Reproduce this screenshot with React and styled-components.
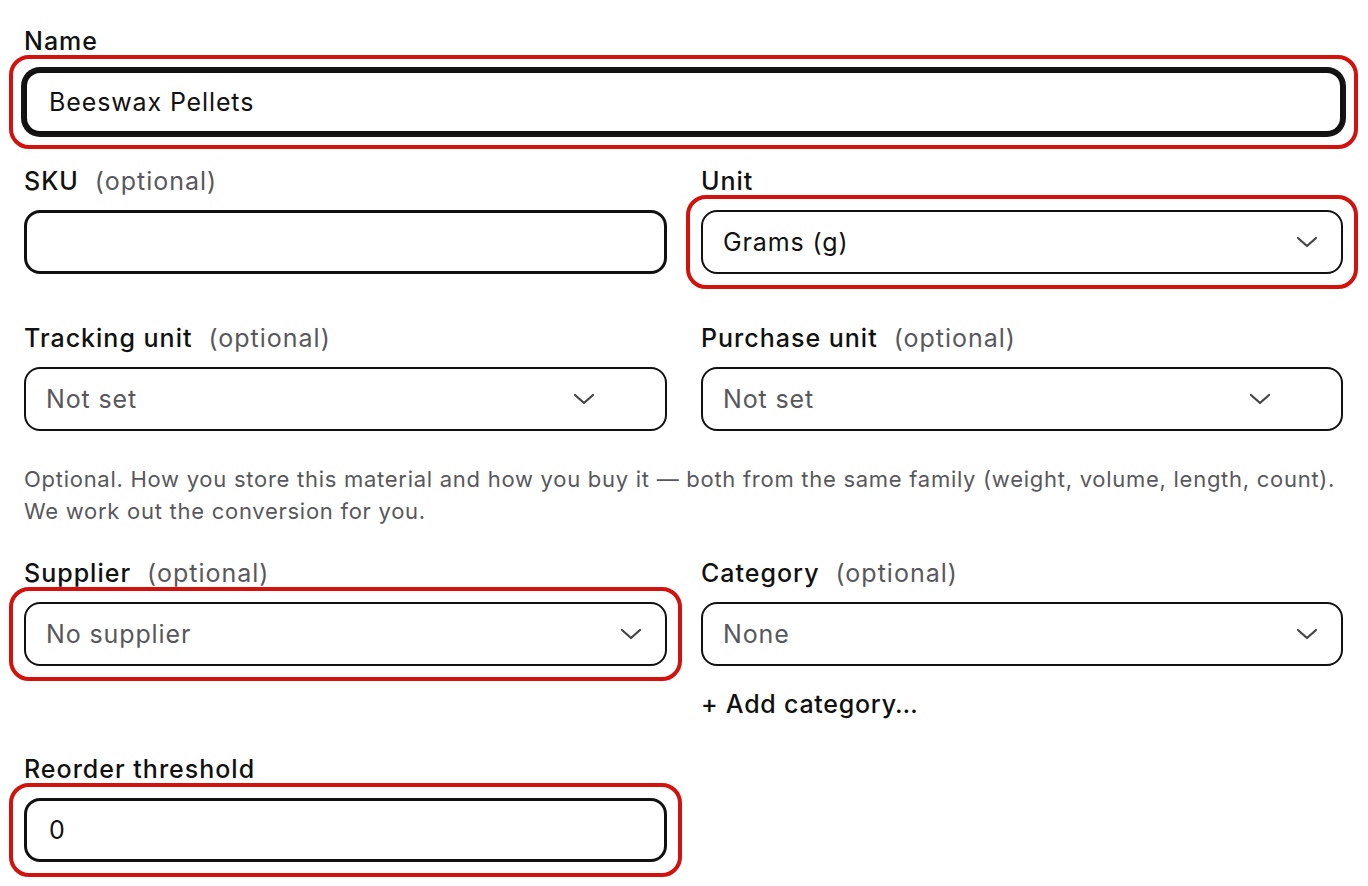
import React from "react";
import styled, { createGlobalStyle } from "styled-components";

const GlobalStyle = createGlobalStyle`
  html, body {
    margin: 0;
    padding: 0;
    background: #ffffff;
  }
  body {
    font-family: Inter, "Liberation Sans", sans-serif;
    color: #111111;
  }
`;

const Chevron = ({ color = "#444" }) => (
  <svg width="22" height="12" viewBox="0 0 22 12" fill="none">
    <polyline
      points="2,2 11,10 20,2"
      stroke={color}
      strokeWidth="2.2"
      strokeLinecap="round"
      strokeLinejoin="round"
    />
  </svg>
);

const App = () => {
  return (
    <>
      <GlobalStyle />
      <Page>
        <Field>
          <Label>Name</Label>
          <ControlWrap>
            <TextInput focused defaultValue="Beeswax Pellets" />
            <Highlight />
          </ControlWrap>
        </Field>

        <Row gapAfter={49}>
          <Field>
            <Label>
              SKU<Optional>(optional)</Optional>
            </Label>
            <ControlWrap>
              <TextInput defaultValue="" />
            </ControlWrap>
          </Field>
          <Field>
            <Label>Unit</Label>
            <ControlWrap>
              <Select>
                <SelectValue>Grams (g)</SelectValue>
                <ChevronBox inset={23}>
                  <Chevron />
                </ChevronBox>
              </Select>
              <Highlight />
            </ControlWrap>
          </Field>
        </Row>

        <Row gapAfter={0}>
          <Field>
            <Label>
              Tracking unit<Optional>(optional)</Optional>
            </Label>
            <ControlWrap>
              <Select>
                <SelectValue muted>Not set</SelectValue>
                <ChevronBox inset={70}>
                  <Chevron />
                </ChevronBox>
              </Select>
            </ControlWrap>
          </Field>
          <Field>
            <Label>
              Purchase unit<Optional>(optional)</Optional>
            </Label>
            <ControlWrap>
              <Select>
                <SelectValue muted>Not set</SelectValue>
                <ChevronBox inset={70}>
                  <Chevron />
                </ChevronBox>
              </Select>
            </ControlWrap>
          </Field>
        </Row>

        <HelpText>
          Optional. How you store this material and how you buy it — both from
          the same family (weight, volume, length, count).
          <br />
          We work out the conversion for you.
        </HelpText>

        <Row gapAfter={35}>
          <Field>
            <Label>
              Supplier<Optional>(optional)</Optional>
            </Label>
            <ControlWrap>
              <Select>
                <SelectValue muted>No supplier</SelectValue>
                <ChevronBox inset={23}>
                  <Chevron />
                </ChevronBox>
              </Select>
              <Highlight />
            </ControlWrap>
          </Field>
          <Field>
            <Label>
              Category<Optional>(optional)</Optional>
            </Label>
            <ControlWrap>
              <Select>
                <SelectValue muted>None</SelectValue>
                <ChevronBox inset={23}>
                  <Chevron />
                </ChevronBox>
              </Select>
            </ControlWrap>
            <AddLink>+ Add category…</AddLink>
          </Field>
        </Row>

        <Row gapAfter={0}>
          <Field>
            <Label>Reorder threshold</Label>
            <ControlWrap>
              <TextInput defaultValue="0" />
              <Highlight />
            </ControlWrap>
          </Field>
        </Row>
      </Page>
    </>
  );
};

export default App;

const Page = styled.div`
  width: 1319px;
  padding: 26px 25px 24px 24px;
  display: flex;
  flex-direction: column;
`;

const Row = styled.div`
  display: grid;
  grid-template-columns: 643px 642px;
  column-gap: 34px;
  margin-bottom: ${(p) => p.gapAfter}px;
`;

const Field = styled.div`
  display: flex;
  flex-direction: column;
  margin-bottom: 32px;

  ${Row} & {
    margin-bottom: 0;
  }
`;

const Label = styled.div`
  font-size: 25px;
  line-height: 30px;
  font-weight: 500;
  letter-spacing: 0.04em;
  color: #111111;
  margin-bottom: 14px;
`;

const Optional = styled.span`
  font-weight: 400;
  color: #58585c;
  margin-left: 16px;
`;

const ControlWrap = styled.div`
  position: relative;
`;

const Highlight = styled.div`
  position: absolute;
  top: -15px;
  bottom: -15px;
  left: -15px;
  right: -15px;
  border: 4px solid #d3120e;
  border-radius: 20px;
  pointer-events: none;
`;

const TextInput = styled.input`
  box-sizing: border-box;
  width: 100%;
  height: 64px;
  padding: 0 20px 0 22px;
  border: 3px solid #111111;
  border-radius: 16px;
  background: #ffffff;
  font-family: Inter, "Liberation Sans", sans-serif;
  font-size: 25px;
  letter-spacing: 0.035em;
  color: #111111;
  outline: none;
  box-shadow: ${(p) => (p.focused ? "0 0 0 3px #151515" : "none")};
`;

const Select = styled.div`
  position: relative;
  box-sizing: border-box;
  height: 64px;
  padding: 0 20px;
  border: 2px solid #111111;
  border-radius: 16px;
  background: #ffffff;
  display: flex;
  align-items: center;
`;

const SelectValue = styled.span`
  font-size: 25px;
  letter-spacing: 0.035em;
  color: ${(p) => (p.muted ? "#58585c" : "#111111")};
`;

const ChevronBox = styled.span`
  position: absolute;
  right: ${(p) => p.inset}px;
  top: 50%;
  transform: translateY(-50%);
  display: flex;
`;

const HelpText = styled.p`
  margin: 32px 0 31px;
  font-size: 22px;
  line-height: 32px;
  letter-spacing: 0.033em;
  color: #58585c;
`;

const AddLink = styled.div`
  margin-top: 23px;
  font-size: 25px;
  line-height: 30px;
  font-weight: 500;
  letter-spacing: 0.03em;
  color: #111111;
  cursor: pointer;
`;
